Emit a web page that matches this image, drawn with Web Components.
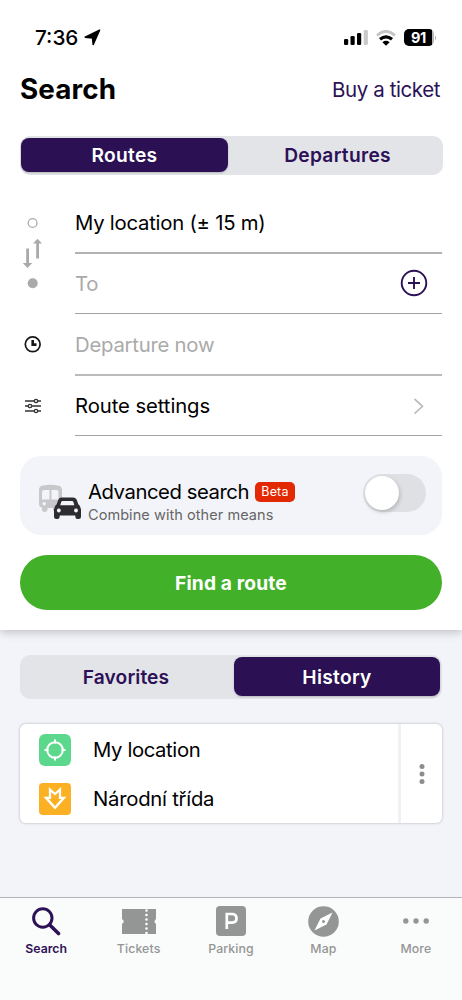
<!DOCTYPE html>
<html lang="en">
<head>
<meta charset="utf-8">
<title>Search</title>
<style>
html,body{margin:0;height:100%}
body{font-family:Inter,"Liberation Sans",sans-serif;background:#f3f4f9;overflow:hidden}
</style>
</head>
<body>
<transit-app></transit-app>
<script>
const define = (name, html) => {
  const t = document.createElement('template');
  t.innerHTML = html;
  customElements.define(name, class extends HTMLElement {
    constructor() {
      super();
      this.attachShadow({mode: 'open'}).append(t.content.cloneNode(true));
    }
  });
};

define('status-bar', `
<style>
:host{display:flex;align-items:center;justify-content:space-between;height:59px;box-sizing:border-box;padding:16px 25px 0 35px;color:#000}
div{display:flex;align-items:center}
.time{font-size:20.700px;font-weight:500}
svg{display:block}
.battery{display:flex;align-items:center;justify-content:center;width:30px;height:17px;box-sizing:border-box;padding-right:1px;border-radius:5px;background:linear-gradient(90deg,#000 28px,#b9b9b9 28px);color:#fff;font-size:14.5px;font-weight:700;letter-spacing:-.3px}
</style>
<div><span class="time">7:36</span>
<svg style="margin-left:6px" width="17" height="17" viewBox="0 0 17 17"><path d="M15.500 1.200 9.200 15.300 8.600 9 1.200 8.200Z" fill="#000" stroke="#000" stroke-width="1.600" stroke-linejoin="round"/></svg></div>
<div>
<svg width="25" height="17" viewBox="0 0 25 17"><rect x="0" y="10" width="4.2" height="6" rx="1.3"/><rect x="6.5" y="7" width="4.2" height="9" rx="1.3"/><rect x="13" y="4" width="4.2" height="12" rx="1.3"/><rect x="19.7" y="1" width="4.2" height="15" rx="1.3" fill="#c9c9c9"/></svg>
<svg style="margin:0 8px 0 7px" width="20" height="16" viewBox="0 0 20 16"><g fill="none"><path d="M1 5.500Q10-2.600 19 5.500" stroke="#c4c4c4" stroke-width="2.600"/><path d="M4 9.300Q10 4.300 16 9.300" stroke="#000" stroke-width="3.200"/></g><path d="M6.400 12.200Q10 9.400 13.600 12.200L10 15.700Z"/></svg>
<span class="battery">91</span>
<svg width="3" height="6" viewBox="0 0 3 6"><path d="M1 .5Q3 3 1 5.500Z" fill="#aaa"/></svg>
</div>`);

define('page-header', `
<style>
:host{display:flex;align-items:center;justify-content:space-between;height:60px;padding:0 22px 0 20px}
h1{margin:0;font-size:27.8px;font-weight:700;letter-spacing:.1px;color:#000}
a{font-size:20.500px;letter-spacing:-.42px;color:#2c1157}
</style>
<h1><slot name="title"></slot></h1><a><slot name="action"></slot></a>`);

define('segmented-control', `
<style>
:host{display:flex;box-sizing:border-box;height:39px;padding:2px 2px 3px 1px;background:#e3e4e8;border-radius:10px}
::slotted(*){flex:1 1 0;display:flex;align-items:center;justify-content:center;border-radius:8px;font-size:19.200px;font-weight:600;letter-spacing:.28px;color:#2c1157}
::slotted([selected]){flex:0 0 207px;background:#2b1053;color:#fff;box-shadow:0 1px 2px #0003}
</style><slot></slot>`);

define('form-row', `
<style>
:host{display:flex;height:62px;align-items:stretch}
:host([short]){height:60px}
.lead{width:55px;display:flex;align-items:center}
.body{flex:1;display:flex;align-items:center;justify-content:space-between;border-bottom:var(--line,1px solid #a3a3a3);font-size:20.3px;letter-spacing:-.23px;color:#000;box-sizing:border-box}
:host([short]) .text{margin-top:-1px}
:host([muted]) .body{color:#aaa}
</style>
<div class="lead"><slot name="icon"></slot></div><div class="body"><div class="text"><slot></slot></div><slot name="end"></slot></div>`);

define('advanced-card', `
<style>
:host{display:flex;align-items:center;box-sizing:border-box;height:79px;margin-top:20px;padding:0 16px 0 18px;background:#f3f4f9;border-radius:21px}
.icon{display:block;margin-top:12px}
.text{flex:1;margin:13px 0 0 7px}
.top{display:flex;align-items:center;height:24px;font-size:20.3px;letter-spacing:-.45px}
.beta{margin-left:6px;width:40px;height:20px;border-radius:5px;background:#e32804;color:#fff;font-size:12.5px;display:flex;align-items:center;justify-content:center;letter-spacing:.2px}
.sub{font-size:14.500px;line-height:21px;color:#666;letter-spacing:.06px}
.toggle{width:63px;height:38px;border-radius:19px;background:#dfe0e4;box-sizing:border-box;padding:2px;margin-bottom:5px}
.toggle i{display:block;width:34px;height:34px;border-radius:50%;background:#fff;box-shadow:1px 2px 4px #0003}
</style>
<svg class="icon" width="43" height="36" viewBox="0 0 43 36">
<path fill="#c8c8cb" d="M4 1.800Q12.500-.5 21 1.800Q24 2.500 24 6V20Q24 24 20 24V27H15V24H9.500V25Q9.500 28 6.500 28Q4 28 4 25V23.500Q1 23 1 20V6Q1 2.500 4 1.800Z"/>
<path fill="#f3f4f9" d="M6 6h5.500v9.500H4V8Q4 6 6 6ZM13.500 6h5q2 0 2 2v7.500h-7Z"/><circle cx="6.200" cy="19.800" r="1.700" fill="#f3f4f9"/>
<path d="M23.500 13.500H35Q38 13.500 39 16.500L40.300 20.300Q43 22 43 25.500V32.500Q43 35 40.500 35H39.500Q37.300 35 37.300 32.500V31.500H21.700V32.500Q21.700 35 19.500 35H18.500Q16 35 16 32.500V25.500Q16 22 18.700 20.300L20 16.500Q21 13.500 23.500 13.500Z" fill="#2d2d31"/>
<path d="M24.500 17H34Q35 17 35.400 18L36.300 21.300H22.200L23.200 18Q23.500 17 24.500 17Z" fill="#f3f4f9"/><circle cx="20.800" cy="26.500" r="1.900" fill="#f3f4f9"/><circle cx="38" cy="26.500" r="1.900" fill="#f3f4f9"/></svg>
<div class="text"><div class="top"><span>Advanced search</span><span class="beta">Beta</span></div><div class="sub">Combine with other means</div></div>
<div class="toggle"><i></i></div>`);

define('primary-button', `
<style>:host{display:flex;align-items:center;justify-content:center;box-sizing:border-box;height:55px;padding-top:1px;margin-top:20px;border-radius:27.500px;background:#43b02a;color:#fff;font-size:19.200px;font-weight:700;letter-spacing:.15px}</style><slot></slot>`);

define('history-card', `
<style>
:host{display:flex;height:99px;margin-top:25px;background:#fff;border-radius:6px;box-shadow:0 0 2px 1px #d3d4d9}
.stops{flex:1;display:flex;flex-direction:column;justify-content:space-between;padding:9px 0 8px 19px}
.stop{display:flex;align-items:center;gap:22px;font-size:20.300px;letter-spacing:-.38px;color:#000;height:33px}
svg{display:block}
.more{width:41px;border-left:3px solid #f0f0f5;display:flex;align-items:center;justify-content:center}
</style>
<div class="stops">
<div class="stop"><svg width="32" height="32" viewBox="0 0 32 32"><rect width="32" height="32" rx="6" fill="#5bd88c"/><g fill="none" stroke="#fff" stroke-width="2"><circle cx="16" cy="16" r="7.800"/><path d="M16 5.500v4M16 22.500v4M5.500 16h4M22.500 16h4"/></g></svg><span>My location</span></div>
<div class="stop"><svg width="32" height="32" viewBox="0 0 32 32"><rect width="32" height="32" rx="4" fill="#fcb023"/><path d="M11 14.800V6.500L16 11 21 6.500V14.800H25L16 24.800 7 14.800Z" fill="none" stroke="#fff" stroke-width="2.300"/></svg><span style="letter-spacing:-.25px">Národní třída</span></div>
</div>
<div class="more"><svg width="6" height="20" viewBox="0 0 6 20" fill="#8d8d8d"><circle cx="3" cy="2.600" r="2.500"/><circle cx="3" cy="10" r="2.500"/><circle cx="3" cy="17.400" r="2.500"/></svg></div>`);

define('tab-item', `
<style>
:host{flex:1;display:flex;flex-direction:column;align-items:center;color:#949695;font-size:12.300px;font-weight:500;letter-spacing:.12px}
:host([selected]){color:#2c1157;font-weight:600;letter-spacing:0}
.i{height:46px;display:flex;align-items:center}
.l{line-height:10px}
</style><div class="i"><slot name="icon"></slot></div><span class="l"><slot></slot></span>`);

define('transit-app', `
<style>
:host{display:flex;flex-direction:column;height:1000px;width:462px;background:#f3f4f9}
.search{background:#fff;height:630px;box-shadow:0 2px 9px #0000003a;clip-path:inset(0 0 -20px 0)}
.pane{padding:0 20px}
.top{margin:17px -1px 17px 0}
.top span:last-child{padding-left:6px}
.form{position:relative}
.swap{position:absolute;left:2px;top:46px}
.lower{flex:1;padding:25px 20px 0}
.lower segmented-control{height:44px}
.lower segmented-control span:first-child{padding-right:3px;letter-spacing:.1px}
.lower segmented-control span:last-child{flex-basis:206px}
nav{display:flex;height:102px;background:#fafbfb;border-top:1px solid #b4b4b7}
svg{display:block}
</style>
<section class="search">
<status-bar></status-bar>
<page-header><span slot="title">Search</span><span slot="action">Buy a ticket</span></page-header>
<div class="pane">
<segmented-control class="top"><span selected>Routes</span><span>Departures</span></segmented-control>
<div class="form">
<form-row style="--line:2px solid #b2b2b2"><svg slot="icon" width="26" height="12" viewBox="0 0 26 12"><circle cx="12.600" cy="6" r="4.400" fill="none" stroke="#aaa" stroke-width="1.300"/></svg><span>My location (± 15 m)</span></form-row>
<form-row muted short><svg slot="icon" width="26" height="12" viewBox="0 0 26 12"><circle cx="12.700" cy="5.300" r="5" fill="#aaa"/></svg><span>To</span><svg slot="end" style="margin:0 14px 1px 0" width="28" height="28" viewBox="0 0 28 28" fill="none" stroke="#2c1157" stroke-width="1.900"><circle cx="14" cy="14" r="12.300"/><path d="M8 14h12M14 8v12"/></svg></form-row>
<form-row muted style="--line:2px solid #bbb"><svg slot="icon" width="26" height="18" viewBox="0 0 26 18" fill="none" stroke="#161616"><circle cx="12.700" cy="8.300" r="7.400" stroke-width="1.700"/><path d="M12.700 4V8.600H16.500" stroke-width="2.600"/></svg><span>Departure now</span></form-row>
<form-row short><svg slot="icon" width="26" height="16" viewBox="0 0 26 16" fill="none" stroke="#333" stroke-width="1.300"><path d="M5 3h9M18 3h3M5 8h3M12 8h9M5 13h9M18 13h3"/><circle cx="16" cy="3" r="1.700"/><circle cx="10" cy="8" r="1.700"/><circle cx="16" cy="13" r="1.700"/></svg><span style="letter-spacing:-.08px">Route settings</span><svg slot="end" style="margin-right:17px" width="12" height="18" viewBox="0 0 12 18" fill="none" stroke="#bdbdbd" stroke-width="1.700"><path d="M1.500 2 9.500 9.300 1.500 16.600"/></svg></form-row>
<svg class="swap" width="21" height="31" viewBox="0 0 21 31" fill="#aaa"><path d="M14.200 20.500V5.500H11L15.500.800 20 5.500H17V20.500ZM4.200 10.500V25H.800L5.500 30 10.300 25H7V10.500Z"/></svg>
</div>
<advanced-card></advanced-card>
<primary-button><span>Find a route</span></primary-button>
</div>
</section>
<section class="lower">
<segmented-control><span>Favorites</span><span selected>History</span></segmented-control>
<history-card></history-card>
</section>
<nav>
<tab-item selected><svg slot="icon" width="30" height="30" viewBox="0 0 30 30" fill="none" stroke="#2c1157"><circle cx="11.800" cy="12" r="9.200" stroke-width="3"/><path d="M18.800 19 27.500 27.500" stroke-width="3.600" stroke-linecap="round"/></svg>Search</tab-item>
<tab-item><svg slot="icon" width="34" height="25" viewBox="0 0 34 25"><path d="M0 0H34V10Q31 12.500 34 15V25H0V15Q3.500 12.500 0 10Z" fill="#949695"/><path d="M24.500 1.500V25" stroke="#fff" stroke-width="2.600" stroke-linecap="round" stroke-dasharray="0 4.500"/></svg>Tickets</tab-item>
<tab-item><svg slot="icon" width="30" height="30" viewBox="0 0 30 30"><rect width="30" height="30" rx="4" fill="#949695"/><path d="M10.800 23V8H16Q20.500 8 20.500 12.300T16 16.600H11" fill="none" stroke="#fff" stroke-width="2.700"/></svg>Parking</tab-item>
<tab-item><svg slot="icon" width="31" height="31" viewBox="0 0 31 31"><circle cx="15.500" cy="15.500" r="15.300" fill="#949695"/><path d="M24.500 6.500 18.500 18.500 6.500 24.500 12.500 12.500Z" fill="#fff"/><circle cx="15.500" cy="15.500" r="1.500" fill="#949695"/></svg>Map</tab-item>
<tab-item><svg slot="icon" width="28" height="8" viewBox="0 0 28 8" fill="#949695"><circle cx="3.800" cy="4" r="2.700"/><circle cx="14" cy="4" r="2.700"/><circle cx="24.200" cy="4" r="2.700"/></svg>More</tab-item>
</nav>`);
</script>
</body>
</html>
